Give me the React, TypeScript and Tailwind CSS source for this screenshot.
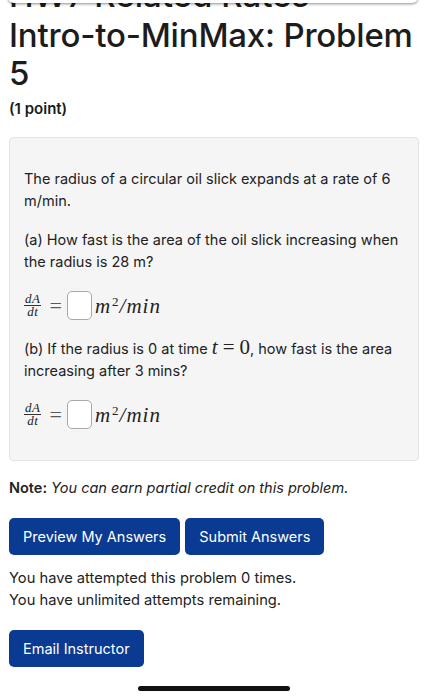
import React from "react";

const sans = "font-['Inter','Liberation_Sans',sans-serif]";
const serif = "font-['Liberation_Serif','DejaVu_Serif',serif]";

function Frac() {
  return (
    <span className={`inline-flex flex-col items-center italic ${serif} text-[13px] leading-[10px] text-[#222]`}>
      <span className="px-[1px] pb-[1px] tracking-[0.5px]">dA</span>
      <span className="block h-px w-full bg-[#333]" />
      <span className="px-[1px] pt-[1px] tracking-[0.5px]">dt</span>
    </span>
  );
}

function MathAnswer() {
  return (
    <div className="flex items-center">
      <Frac />
      <span className={`${serif} ml-[8px] mr-[5px] text-[22px] leading-none text-[#5a5a5a]`}>=</span>
      <span className="h-[29px] w-[25px] rounded-[5px] border border-[#a8a8a8] bg-white" />
      <span className={`${serif} ml-[3px] text-[21px] italic tracking-[1px] text-[#222]`}>
        m<sup className="ml-[1px] text-[13px] not-italic">2</sup>/min
      </span>
    </div>
  );
}

export default function App() {
  return (
    <div className={`relative h-[700px] w-[428px] overflow-hidden bg-white text-[#1a1a1a] ${sans}`}>
      <div className="h-[14px] overflow-hidden">
        <h2 className="-mt-[24px] px-[9px] text-[33px] font-medium leading-[38px] text-[#1c1c1c]">
          HW7 Related Rates
        </h2>
      </div>
      <div className="absolute left-[8px] top-[-20px] h-[23px] w-[410px] rounded-b-[6px] bg-white shadow-[0_1px_3px_rgba(0,0,0,0.45)]" />

      <h1 className="mt-[2px] px-[9px] text-[33px] font-medium leading-[38px] tracking-[-0.2px] text-[#1c1c1c]">
        Intro-to-MinMax: Problem 5
      </h1>
      <div className="mt-[7px] px-[9px] text-[15px] font-semibold leading-[20px]">(1 point)</div>

      <div className="mx-[9px] mt-[18px] rounded-[4px] border border-[#e3e3e3] bg-[#f5f5f5] px-[14px] pb-[31px] pt-[30px] text-[14.5px] leading-[22px] text-[#222]">
        <p>The radius of a circular oil slick expands at a rate of 6 m/min.</p>
        <p className="mt-[17px]">(a) How fast is the area of the oil slick increasing when the radius is 28 m?</p>
        <div className="mt-[18px]">
          <MathAnswer />
        </div>
        <p className="mt-[16px]">
          (b) If the radius is 0 at time <span className={`${serif} text-[21px] italic`}>t</span>
          <span className={`${serif} mx-[5px] text-[21px]`}>=</span>
          <span className={`${serif} text-[21px]`}>0</span>, how fast is the area increasing after 3 mins?
        </p>
        <div className="mt-[18px]">
          <MathAnswer />
        </div>
      </div>

      <p className="mt-[17px] px-[9px] text-[14.5px] leading-[20px] text-[#222]">
        <span className="font-semibold">Note:</span> <i>You can earn partial credit on this problem.</i>
      </p>

      <div className="mt-[20px] flex gap-[5px] px-[9px]">
        <button className="h-[37px] rounded-[5px] bg-[#0a3a91] px-[14px] text-[14.5px] text-white">Preview My Answers</button>
        <button className="h-[37px] rounded-[5px] bg-[#0a3a91] px-[14px] text-[14.5px] text-white">Submit Answers</button>
      </div>

      <p className="mt-[12px] px-[9px] text-[14.7px] leading-[22px] text-[#222]">
        You have attempted this problem 0 times.
        <br />
        You have unlimited attempts remaining.
      </p>

      <div className="mt-[19px] px-[9px]">
        <button className="h-[37px] rounded-[5px] bg-[#0a3a91] px-[14px] text-[14.5px] text-white">Email Instructor</button>
      </div>

      <div className="absolute bottom-[9px] left-[138px] h-[5px] w-[152px] rounded-full bg-[#111]" />
    </div>
  );
}
